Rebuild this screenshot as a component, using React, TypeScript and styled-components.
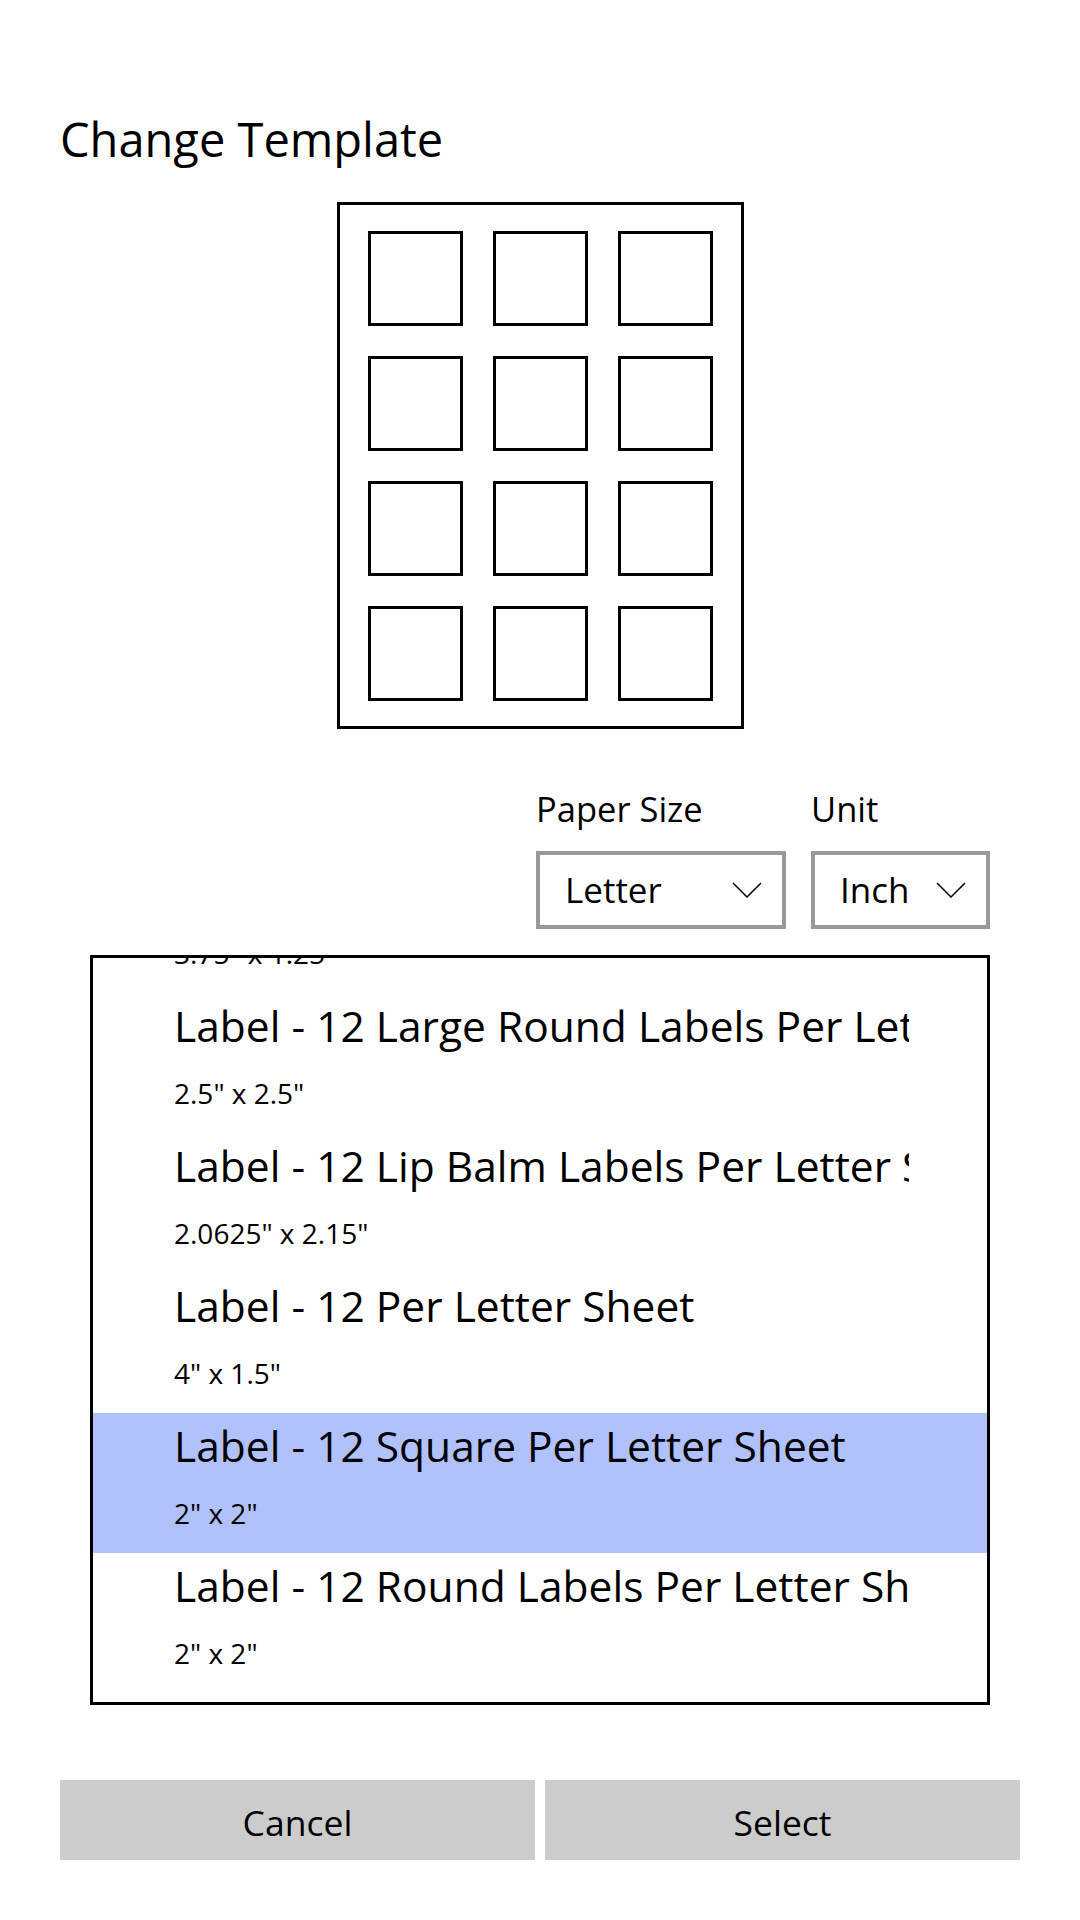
import { useLayoutEffect, useRef, useState } from "react";
import styled, { createGlobalStyle } from "styled-components";

const GlobalStyle = createGlobalStyle`
  html, body {
    margin: 0;
    padding: 0;
    background: #ffffff;
  }
  body {
    font-family: "Open Sans", "Noto Sans", "DejaVu Sans", sans-serif;
    color: #000000;
  }
`;

const Page = styled.div`
  width: 1080px;
  min-height: 1920px;
  box-sizing: border-box;
  padding: 109px 60px 0;
  display: flex;
  flex-direction: column;
`;

const Title = styled.h1`
  margin: 0;
  font-size: 47px;
  font-weight: 400;
  line-height: 60px;
`;

const Sheet = styled.div`
  align-self: center;
  margin-top: 33px;
  width: 407px;
  height: 527px;
  box-sizing: border-box;
  border: 3px solid #000;
  padding: 25.5px 28px;
  display: grid;
  grid-template-columns: repeat(3, 95px);
  grid-auto-rows: 95px;
  gap: 30px;
`;

const Cell = styled.div`
  box-sizing: border-box;
  border: 3px solid #000;
`;

const Controls = styled.div`
  display: flex;
  justify-content: flex-end;
  gap: 25px;
  margin-top: 58px;
  padding-right: 30px;
`;

const Field = styled.div<{ $width: number }>`
  display: flex;
  flex-direction: column;
  width: ${(p) => p.$width}px;
`;

const FieldLabel = styled.div`
  font-size: 34.5px;
  line-height: 44px;
  margin-bottom: 20px;
  white-space: nowrap;
`;

const Combo = styled.div`
  height: 78px;
  box-sizing: border-box;
  border: 4px solid #999999;
  padding: 0 20px 0 25px;
  display: flex;
  align-items: center;
  justify-content: space-between;
  font-size: 35px;
  line-height: 70px;
`;

const ListBox = styled.div`
  margin: 26px 30px 0;
  height: 750px;
  box-sizing: border-box;
  border: 3px solid #000;
  overflow: hidden;
`;

const Row = styled.div<{ $selected: boolean }>`
  height: 140px;
  box-sizing: border-box;
  padding: 0 78px 0 81px;
  background: ${(p) => (p.$selected ? "#b0c1fc" : "transparent")};
  cursor: pointer;
`;

const ItemTitle = styled.div`
  font-size: 42.5px;
  line-height: 66px;
  white-space: nowrap;
  overflow: hidden;
`;

const ItemSize = styled.div`
  font-size: 28px;
  line-height: 68px;
  white-space: nowrap;
`;

const Buttons = styled.div`
  display: grid;
  grid-template-columns: 1fr 1fr;
  gap: 10px;
  margin-top: 75px;
`;

const Button = styled.button`
  height: 80px;
  border: none;
  background: #cccccc;
  padding: 4px 0 0;
  font-family: inherit;
  font-size: 35.5px;
  color: #000;
`;

const Chevron = () => (
  <svg width="30" height="16" viewBox="0 0 30 16">
    <polyline points="1,1 15,15 29,1" fill="none" stroke="#000" strokeWidth="1.5" />
  </svg>
);

const templates = [
  { name: "Label - 12 Address Labels Per Letter Sheet", size: '3.75" x 1.25"' },
  { name: "Label - 12 Large Round Labels Per Letter Sheet", size: '2.5" x 2.5"' },
  { name: "Label - 12 Lip Balm Labels Per Letter Sheet", size: '2.0625" x 2.15"' },
  { name: "Label - 12 Per Letter Sheet", size: '4" x 1.5"' },
  { name: "Label - 12 Square Per Letter Sheet", size: '2" x 2"' },
  { name: "Label - 12 Round Labels Per Letter Sheet", size: '2" x 2"' },
  { name: "Label - 14 Per Letter Sheet", size: '4" x 1.33"' },
];

export default function App() {
  const [selected, setSelected] = useState(4);
  const listRef = useRef<HTMLDivElement>(null);

  useLayoutEffect(() => {
    if (listRef.current) listRef.current.scrollTop = 105;
  }, []);

  return (
    <Page>
      <GlobalStyle />
      <Title>Change Template</Title>

      <Sheet>
        {Array.from({ length: 12 }).map((_, i) => (
          <Cell key={i} />
        ))}
      </Sheet>

      <Controls>
        <Field $width={250}>
          <FieldLabel>Paper Size</FieldLabel>
          <Combo>
            <span>Letter</span>
            <Chevron />
          </Combo>
        </Field>
        <Field $width={179}>
          <FieldLabel>Unit</FieldLabel>
          <Combo>
            <span>Inch</span>
            <Chevron />
          </Combo>
        </Field>
      </Controls>

      <ListBox ref={listRef}>
        {templates.map((t, i) => (
          <Row key={t.name} $selected={i === selected} onClick={() => setSelected(i)}>
            <ItemTitle>{t.name}</ItemTitle>
            <ItemSize>{t.size}</ItemSize>
          </Row>
        ))}
      </ListBox>

      <Buttons>
        <Button>Cancel</Button>
        <Button>Select</Button>
      </Buttons>
    </Page>
  );
}
